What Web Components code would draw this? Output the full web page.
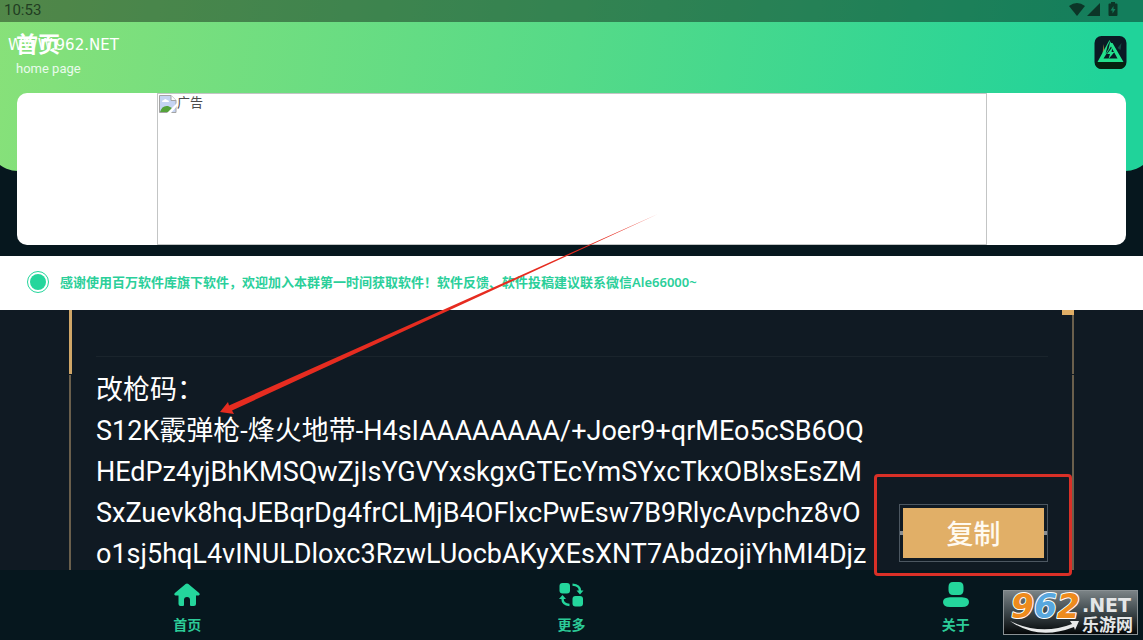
<!DOCTYPE html>
<html lang="zh-CN">
<head>
<meta charset="utf-8">
<title>首页</title>
<style>
  body {
    margin: 0;
    background: #06171e;
    font-family: Roboto, "Noto Sans CJK SC", sans-serif;
  }
</style>
</head>
<body>
<app-shell>
  <status-bar time="10:53"></status-bar>
  <page-header>
    <span slot="title">首页</span>
    <span slot="subtitle">home page</span>
  </page-header>
  <ad-card>广告</ad-card>
  <notice-bar>感谢使用百万软件库旗下软件，欢迎加入本群第一时间获取软件！软件反馈、软件投稿建议联系微信Ale66000~</notice-bar>
  <code-panel>
    改枪码：<br>
    S12K霰弹枪-烽火地带-H4sIAAAAAAAA/+Joer9+qrMEo5cSB6OQ<br>
    HEdPz4yjBhKMSQwZjIsYGVYxskgxGTEcYmSYxcTkxOBlxsEsZM<br>
    SxZuevk8hqJEBqrDg4frCLMjB4OFlxcPwEsw7B9RlycAvpchz8vO<br>
    o1sj5hqL4vINULDloxc3RzwLUocbAKyXEsXNT7AbdzojiYhMI4Djz
    <copy-button slot="action">复制</copy-button>
  </code-panel>
  <tab-bar>
    <tab-item href="#home">
      <svg slot="icon" width="26" height="24" viewBox="0 0 26 24" fill="#24d69c"><path d="M11.600 1 Q13 0 14.400 1 L25.400 10.300 Q26.400 12 24.600 12.400 H22 V21 Q22 23 20 23 H17 Q16 23 16 22 V17 A3 3 0 0 0 10 17 V22 Q10 23 9 23 H6.500 Q4.500 23 4.500 21 V12.400 H1.400 Q-.4 12 .6 10.300 Z"/></svg>
      首页
    </tab-item>
    <tab-item href="#more">
      <svg slot="icon" width="26" height="24" viewBox="0 0 26 24" fill="#24d69c"><rect x="1.500" y="0" width="10.500" height="10.500" rx="3"/><rect x="14.500" y="13" width="10.500" height="10.500" rx="3"/><g fill="none" stroke="#24d69c" stroke-width="2.400"><path d="M14.500 1.600 Q22 2 22 8"/><path d="M11.500 22 Q4.500 21.500 4.500 15.500"/></g><path d="M18.500 7.500 H25.500 L22 11.500 Z M1 16 H8 L4.500 12 Z"/></svg>
      更多
    </tab-item>
    <tab-item href="#about">
      <svg slot="icon" width="26" height="24" viewBox="0 0 26 24" fill="#24d69c"><path d="M10 -1 H16 Q20.500 -1 20.500 4 V7 Q20.500 12 16 12 H10 Q5.500 12 5.500 7 V4 Q5.500 -1 10 -1 Z M7 14.200 H19 Q26 14.500 26 19 Q26 24 19 24 H7 Q0 24 0 19 Q0 14.500 7 14.200 Z"/></svg>
      关于
    </tab-item>
  </tab-bar>
  <pointer-arrow slot="overlay"></pointer-arrow>
  <site-url slot="overlay">WWW.962.NET</site-url>
  <site-badge slot="overlay"></site-badge>
</app-shell>

<script>
  // shared base: puts the class's static html into an open shadow root
  class Base extends HTMLElement {
    constructor() {
      super()
      const template = document.createElement('template')
      template.innerHTML = this.constructor.html
      this.shadow = this.attachShadow({ mode: 'open' })
      this.shadow.appendChild(template.content.cloneNode(true))
    }
  }

  class AppShell extends Base {
    static html = `
      <style>
        :host {
          position: relative;
          z-index: 0;
          display: flex;
          flex-direction: column;
          min-height: 100vh;
          overflow: hidden;
        }
        .backdrop {
          position: absolute;
          z-index: -1;
          top: 0;
          left: -12px;
          right: -12px;
          height: 171px;
          border-radius: 0 0 30px 30px;
          background: linear-gradient(100deg, #89e179, #55da88 50%, #20d39a 95%);
        }
      </style>
      <div class="backdrop"></div>
      <slot></slot>
      <slot name="overlay"></slot>`
  }

  class StatusBar extends Base {
    static html = `
      <style>
        :host {
          display: flex;
          align-items: center;
          justify-content: space-between;
          height: 22px;
          padding: 0 24px 0 4px;
          background: rgba(0, 0, 0, .4);
          color: #213d22;
          font-size: 15px;
          line-height: 20px;
        }
        time {
          padding-bottom: 2px;
        }
        svg {
          display: block;
          margin-bottom: 4px;
        }
      </style>
      <time></time>
      <svg width="50" height="16" viewBox="0 0 50 16" fill="#0c3527">
        <path d="M0 5 Q8 -1 16 5 L8 15 Z"/>
        <path d="M31 2 V15 H18 Z"/>
        <path fill-rule="evenodd" d="M42 1 H46 V2.500 H47.500 Q48.500 2.500 48.500 3.500 V14 Q48.500 15 47.500 15 H40.500 Q39.500 15 39.500 14 V3.500 Q39.500 2.500 40.500 2.500 H42 Z M44.500 5 L41.500 9.500 H43.500 V12.500 L46.500 8 H44.500 Z"/>
      </svg>`

    connectedCallback() {
      this.shadow.querySelector('time').textContent = this.getAttribute('time')
    }
  }

  class PageHeader extends Base {
    static html = `
      <style>
        :host {
          display: flex;
          align-items: flex-start;
          justify-content: space-between;
          height: 71px;
          padding: 0 16px;
          box-sizing: border-box;
          color: #fff;
        }
        h1 {
          margin: 10px 0 0;
          font-size: 22px;
          line-height: 26px;
        }
        p {
          margin: 0;
          font-size: 13px;
          line-height: 22px;
          color: #e9fbec;
        }
        button {
          margin: 14px 0 0;
          padding: 0;
          border: 0;
          background: none;
        }
        svg {
          display: block;
        }
      </style>
      <div>
        <h1><slot name="title"></slot></h1>
        <p><slot name="subtitle"></slot></p>
      </div>
      <button aria-label="logo">
        <svg width="33" height="33" viewBox="0 0 32 33">
          <rect width="32" height="33" rx="7" fill="#0a1a24"/>
          <path d="M1 26 H31 Q31 33 25 33 H7 Q1 33 1 26 Z" fill="#06220f"/>
          <path d="M9 8 L10 15 L8 18 Z" fill="#8a7a3c"/>
          <path d="M23 12 L27 7 L26 14 Z" fill="#144a44"/>
          <path fill="#22e08c" fill-rule="evenodd" d="M3 26 L15 4 L16.500 7 L18 7 L29 26 Z M9 22.500 H23 L16.500 10.500 Z"/>
          <path d="M16 4 L14 13 L11 18 L13 10 Z" fill="#0a1a24"/>
          <path fill="#22e08c" d="M18 11 L12.500 18 H15.500 L14 23 L20 16 H17 Z"/>
        </svg>
      </button>`
  }

  class AdCard extends Base {
    static html = `
      <style>
        :host {
          display: flex;
          height: 152px;
          margin: 0 17px 11px;
          border-radius: 10px;
          background: #fff;
        }
        .image {
          display: flex;
          flex: 1;
          align-items: flex-start;
          margin: 0 139px 0 140px;
          padding: 1px;
          border: 1px solid #c3c5c5;
          color: #4c4c4c;
          font-size: 13px;
          line-height: 16px;
        }
      </style>
      <div class="image" role="img">
        <svg width="18" height="18" viewBox="0 0 18 18">
          <path d="M.5 .5 H12 L17 5.500 V17.500 H.5 Z" fill="#c5d4f2" stroke="#a4a4a4"/>
          <path d="M12 .5 V5.500 H17" fill="#fff" stroke="#a4a4a4"/>
          <path d="M3 7 Q3 5 5 5 Q6 3 8 5 Q10 5 10 7 Z" fill="#fff"/>
          <path d="M1 17 Q3 10 9 11 L13 13 L11 17 Z" fill="#55a33b"/>
          <path d="M8 18 L18 8 V11 L12 18 Z" fill="#fff"/>
        </svg>
        <slot></slot>
      </div>`
  }

  class NoticeBar extends Base {
    static html = `
      <style>
        :host {
          display: flex;
          align-items: center;
          gap: 11px;
          height: 54px;
          padding: 0 27px;
          box-sizing: border-box;
          padding-bottom: 2px;
          background: #fff;
          color: #2bcf9a;
          font: 600 13px/20px "Noto Sans", "Noto Sans CJK SC", sans-serif;
        }
        i {
          width: 16px;
          height: 16px;
          padding: 2px;
          border: 1px solid #24d69c;
          border-radius: 50%;
          background: #24d69c content-box;
        }
      </style>
      <i></i>
      <span><slot></slot></span>`
  }

  class CodePanel extends Base {
    static html = `
      <style>
        :host {
          display: flex;
          flex: 1;
          padding: 0 69px;
          background: #101a23;
        }
        .rail {
          display: grid;
          grid-template-rows: 64px 1fr;
          gap: 1px;
          width: 12px;
        }
        .rail b {
          width: 2px;
          background: #6a5f4c;
        }
        .rail .thick {
          width: 3px;
          background: #d0a667;
        }
        .end {
          justify-items: end;
        }
        .end .cap {
          width: 12px;
          background: linear-gradient(#e0ae66, #e0ae66) 0 0 / 12px 5px no-repeat,
            linear-gradient(#6a5f4c, #6a5f4c) 100% 0 / 2px 100% no-repeat;
        }
        main {
          flex: 1;
          display: flex;
          flex-direction: column;
          min-width: 0;
          padding: 46px 14px 0 15px;
        }
        hr {
          width: 100%;
          height: 1px;
          margin: 0 0 13px;
          border: 0;
          background: #1a242c;
        }
        .row {
          display: flex;
          flex: 1;
          justify-content: space-between;
          align-items: flex-end;
        }
        p {
          align-self: flex-start;
          margin: 0;
          color: #fff;
          font-size: 27px;
          line-height: 41px;
          height: 200px;
          white-space: nowrap;
        }
      </style>
      <div class="rail"><b class="thick"></b><b></b></div>
      <main>
        <hr>
        <div class="row">
          <p><slot></slot></p>
          <slot name="action"></slot>
        </div>
      </main>
      <div class="rail end"><b class="cap"></b><b></b></div>`
  }

  class CopyButton extends Base {
    static html = `
      <style>
        :host {
          position: relative;
          z-index: 1;
          display: block;
          flex: none;
          margin-bottom: 8px;
        }
        .frame {
          padding: 3px;
          border: 1px solid #4c5761;
          background: linear-gradient(#8b8f92, #8b8f92) 0 50% / 100% 4px no-repeat;
        }
        button {
          display: block;
          width: 141px;
          height: 50px;
          padding: 0;
          border: 0;
          background: #e1af67;
          color: #fffaf0;
          font: 500 27px/48px "Noto Sans CJK SC", sans-serif;
        }
        .highlight {
          position: absolute;
          inset: -30px -24px -14px -25px;
          border: 3px solid #d93027;
          border-radius: 4px;
          pointer-events: none;
        }
      </style>
      <div class="frame"><button><slot></slot></button></div>
      <div class="highlight"></div>`
  }

  class TabBar extends Base {
    static html = `
      <style>
        :host {
          display: block;
          background: #06171e;
        }
        nav {
          display: grid;
          grid-template-columns: repeat(3, 1fr);
          height: 70px;
          margin: 0 -5px;
        }
      </style>
      <nav><slot></slot></nav>`
  }

  class TabItem extends Base {
    static html = `
      <style>
        :host {
          display: block;
        }
        a {
          display: flex;
          flex-direction: column;
          align-items: center;
          gap: 8px;
          padding-top: 13px;
          color: #2ccb98;
          font-size: 14px;
          font-weight: bold;
          line-height: 20px;
          text-decoration: none;
        }
        ::slotted(svg) {
          display: block;
          overflow: visible;
        }
      </style>
      <a><slot name="icon"></slot><span><slot></slot></span></a>`

    connectedCallback() {
      this.shadow.querySelector('a').href = this.getAttribute('href')
    }
  }

  class PointerArrow extends Base {
    static html = `
      <style>
        :host {
          position: absolute;
          z-index: 2;
          top: 214px;
          left: 220px;
          pointer-events: none;
        }
        svg {
          display: block;
        }
      </style>
      <svg width="440" height="202" viewBox="0 0 440 202">
        <path fill="#e62c20" d="M0 198 L8 188 L9 191.500 L438 0 L12 196.500 L14 200 Z"/>
      </svg>`
  }

  class SiteUrl extends Base {
    static html = `
      <style>
        :host {
          position: absolute;
          top: 36px;
          left: 8px;
          color: #fff;
          font: 15px/18px "DejaVu Sans", sans-serif;
        }
      </style>
      <slot></slot>`
  }

  class SiteBadge extends Base {
    static html = `
      <style>
        :host {
          position: absolute;
          z-index: 3;
          right: 5px;
          bottom: 5px;
        }
        svg {
          display: block;
          overflow: visible;
        }
        .digits {
          font: italic bold 33px "DejaVu Sans", sans-serif;
          stroke: #fff;
          stroke-width: 2px;
          stroke-linejoin: round;
          paint-order: stroke;
        }
        .net {
          font: bold 19px "DejaVu Sans", sans-serif;
        }
        .name {
          font: bold 17px "Noto Sans CJK SC", sans-serif;
        }
      </style>
      <svg width="135" height="45" viewBox="0 0 135 45">
        <defs>
          <linearGradient id="plate" x1="0" y1="0" x2="0" y2="1">
            <stop offset="0" stop-color="#7c8487"/>
            <stop offset=".5" stop-color="#3d474b"/>
            <stop offset="1" stop-color="#020506"/>
          </linearGradient>
        </defs>
        <rect x=".5" y=".5" width="134" height="44" fill="url(#plate)" stroke="#8a9194"/>
        <path d="M7 31 Q38 46 69 34 L67 31 L76 31 L72 40 L71 37 Q35 51 7 31 Z" fill="#e8eaea"/>
        <text class="digits" x="8" y="28"><tspan fill="#ee8b1d">9</tspan><tspan fill="#58a7de">6</tspan><tspan fill="#ee8b1d">2</tspan></text>
        <text class="net" x="79" y="22" fill="#e4e6e7">.NET</text>
        <text class="name" x="79" y="41" fill="#e4e6e7">乐游网</text>
      </svg>`
  }

  customElements.define('app-shell', AppShell)
  customElements.define('status-bar', StatusBar)
  customElements.define('page-header', PageHeader)
  customElements.define('ad-card', AdCard)
  customElements.define('notice-bar', NoticeBar)
  customElements.define('code-panel', CodePanel)
  customElements.define('copy-button', CopyButton)
  customElements.define('tab-bar', TabBar)
  customElements.define('tab-item', TabItem)
  customElements.define('pointer-arrow', PointerArrow)
  customElements.define('site-url', SiteUrl)
  customElements.define('site-badge', SiteBadge)
</script>
</body>
</html>
